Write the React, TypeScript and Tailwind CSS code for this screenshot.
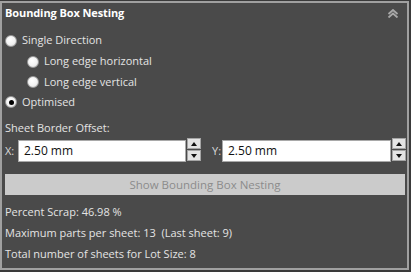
import { ReactNode } from "react";

function Radio({ checked, label }: { checked?: boolean; label: string }) {
  return (
    <div className="flex items-center gap-[5px]">
      <span className="flex size-[12px] items-center justify-center rounded-full border border-[#9a9a9a] bg-[radial-gradient(circle_at_40%_35%,#ffffff_0%,#f2f2f2_55%,#cfcfcf_100%)]">
        {checked && <span className="size-[5px] rounded-full bg-black" />}
      </span>
      <span>{label}</span>
    </div>
  );
}

function Spinner() {
  return (
    <div className="flex w-[14px] flex-col gap-[1px]">
      <button className="flex h-[11px] items-center justify-center border border-[#a5a5a5] bg-[#e4e4e4]">
        <svg width="6" height="4" viewBox="0 0 6 4">
          <path d="M0 4 L3 0 L6 4 Z" fill="#111" />
        </svg>
      </button>
      <button className="flex h-[11px] items-center justify-center border border-[#a5a5a5] bg-[#e4e4e4]">
        <svg width="6" height="4" viewBox="0 0 6 4">
          <path d="M0 0 L6 0 L3 4 Z" fill="#111" />
        </svg>
      </button>
    </div>
  );
}

function OffsetField({ label, value, labelWidth, inputWidth }: { label: string; value: string; labelWidth: string; inputWidth: string }) {
  return (
    <div className="flex h-[22px] items-center">
      <span className={`${labelWidth} text-[#d8d8d8]`}>{label}</span>
      <div className={`flex h-[22px] ${inputWidth} items-center border border-[#a9a9a9] bg-white pl-[5px] text-[12px] text-[#111]`}>
        {value}
      </div>
      <div className="ml-[1px] -mt-[2px] h-[23px] self-start">
        <Spinner />
      </div>
    </div>
  );
}

function Row({ children, className = "" }: { children: ReactNode; className?: string }) {
  return <div className={`flex h-[20px] items-center ${className}`}>{children}</div>;
}

export default function App() {
  return (
    <div
      className="h-[272px] w-[411px] bg-[#3a3a3a] pt-px"
      style={{ fontFamily: '"Open Sans", "Noto Sans", sans-serif' }}
    >
      <div className="flex h-[269px] w-[409px] flex-col border-2 border-[#a0a0a0] bg-[#4a4a4a] pl-[3px] pr-[2px] text-[11px] text-[#e4e4e4]">
        <div className="flex h-[20px] items-center justify-between">
          <span className="text-[11px] font-bold tracking-[-0.1px] text-white">Bounding Box Nesting</span>
          <svg width="12" height="9" viewBox="0 0 12 9" className="mr-[6px]">
            <path d="M1.5 5 L6 1 L10.5 5" stroke="#a8a8a8" strokeWidth="1.8" fill="none" />
            <path d="M1.5 8.5 L6 4.5 L10.5 8.5" stroke="#a8a8a8" strokeWidth="1.8" fill="none" />
          </svg>
        </div>

        <div className="mt-[7px] flex h-[21px] items-center">
          <Radio label="Single Direction" />
        </div>
        <div className="flex h-[21px] items-center pl-[22px]">
          <Radio label="Long edge horizontal" />
        </div>
        <div className="flex h-[20px] items-center pl-[22px]">
          <Radio label="Long edge vertical" />
        </div>
        <div className="flex h-[20px] items-center">
          <Radio checked label="Optimised" />
        </div>

        <Row className="mt-[6px]">Sheet Border Offset:</Row>

        <div className="mt-[2px] flex gap-[11px]">
          <OffsetField label="X:" value="2.50 mm" labelWidth="w-[13px]" inputWidth="w-[168px]" />
          <OffsetField label="Y:" value="2.50 mm" labelWidth="w-[10px]" inputWidth="w-[169px]" />
        </div>

        <button className="mt-[12px] flex h-[21px] w-[400px] items-center justify-center bg-[#cbcbcb] text-[11.5px] text-[#8c8c8c]">
          Show Bounding Box Nesting
        </button>

        <Row className="mt-[7px]">Percent Scrap: 46.98 %</Row>
        <Row className="mt-px">Maximum parts per sheet: 13&nbsp;&nbsp;(Last sheet: 9)</Row>
        <Row className="mt-px">Total number of sheets for Lot Size: 8</Row>
      </div>
    </div>
  );
}
